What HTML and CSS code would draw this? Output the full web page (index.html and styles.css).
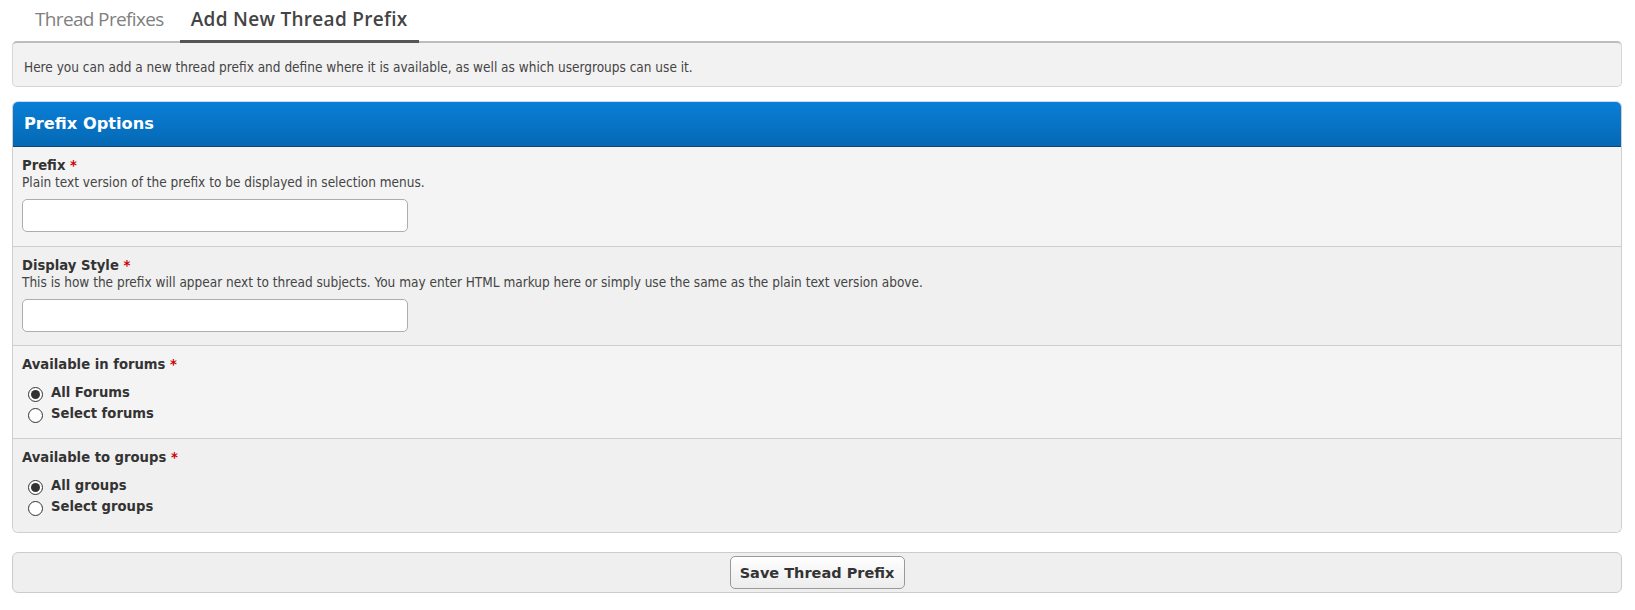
FILE: index.html
```html
<!DOCTYPE html>
<html>
<head>
<meta charset="utf-8">
<link rel="stylesheet" href="styles.css">
</head>
<body>
<div class="page">
  <div class="tabs">
    <a class="tab">Thread Prefixes</a>
    <a class="tab active">Add New Thread Prefix</a>
  </div>
  <div class="intro">Here you can add a new thread prefix and define where it is available, as well as which usergroups can use it.</div>

  <div class="panel">
    <div class="panel-head">Prefix Options</div>
    <div class="row light">
      <div class="label">Prefix <span class="req">*</span></div>
      <div class="desc">Plain text version of the prefix to be displayed in selection menus.</div>
      <input class="text" type="text">
    </div>
    <div class="row dark">
      <div class="label">Display Style <span class="req">*</span></div>
      <div class="desc">This is how the prefix will appear next to thread subjects. You may enter HTML markup here or simply use the same as the plain text version above.</div>
      <input class="text" type="text">
    </div>
    <div class="row light">
      <div class="label">Available in forums <span class="req">*</span></div>
      <div class="options">
        <label class="opt"><span class="radio checked"></span>All Forums</label>
        <label class="opt"><span class="radio"></span>Select forums</label>
      </div>
    </div>
    <div class="row dark last">
      <div class="label">Available to groups <span class="req">*</span></div>
      <div class="options">
        <label class="opt"><span class="radio checked"></span>All groups</label>
        <label class="opt"><span class="radio"></span>Select groups</label>
      </div>
    </div>
  </div>

  <div class="footer">
    <button class="btn">Save Thread Prefix</button>
  </div>
</div>
</body>
</html>
```
FILE: styles.css
```css
html, body {
  margin: 0;
  padding: 0;
  background: #fff;
}
body {
  font-family: "DejaVu Sans Condensed", "DejaVu Sans", sans-serif;
  font-size: 13px;
  color: #333;
}
.page {
  padding: 0 13px 0 12px;
}
.tabs {
  display: flex;
  gap: 5px;
  padding-left: 12px;
  height: 41px;
  position: relative;
  z-index: 2;
}
.tab {
  display: block;
  font-family: "Open Sans", sans-serif;
  font-size: 19px;
  line-height: 19px;
  padding: 10px 11px 0;
  color: #808080;
  letter-spacing: -0.65px;
}
.tab.active {
  color: #444;
  font-weight: 600;
  letter-spacing: 0.3px;
  border-bottom: 3px solid #555;
  height: 30px;
}
.intro {
  position: relative;
  z-index: 1;
  background: #f2f2f2;
  border: 1px solid #d6d6d6;
  border-top: 2px solid #bdbdbd;
  border-radius: 5px;
  box-sizing: border-box;
  height: 46px;
  padding: 16px 0 0 11px;
  font-size: 13.5px;
  line-height: 17px;
  color: #444;
}
.panel {
  margin-top: 14px;
  border: 1px solid #cfcfcf;
  border-top-color: #c8dcec;
  border-radius: 6px;
  overflow: hidden;
}
.panel-head {
  height: 45px;
  box-sizing: border-box;
  background: linear-gradient(#0a7fd7, #0569b4);
  border-bottom: 1px solid #0e4470;
  color: #fff;
  font-family: "DejaVu Sans", sans-serif;
  font-weight: bold;
  font-size: 16.2px;
  line-height: 44px;
  padding-left: 11px;
}
.row {
  padding: 10px 9px 0;
  border-bottom: 1px solid #cfcfcf;
  box-sizing: border-box;
}
.row.last { border-bottom: none; }
.row.light { background: #f4f4f4; }
.row.dark { background: #f0f0f0; }
.row:nth-child(2) { height: 100px; }
.row:nth-child(3) { height: 99px; }
.row:nth-child(4) { height: 93px; }
.row:nth-child(5) { height: 93px; }
.label {
  font-family: "DejaVu Sans", sans-serif;
  font-weight: bold;
  font-size: 13.2px;
  line-height: 17px;
  color: #333;
}
.req { color: #c00; }
.desc {
  font-size: 13.5px;
  line-height: 17px;
  color: #444;
}
.text {
  display: block;
  margin-top: 8px;
  width: 386px;
  height: 33px;
  box-sizing: border-box;
  border: 1px solid #adadad;
  border-radius: 5px;
  background: #fff;
}
.options {
  margin-top: 9px;
  padding-left: 6px;
}
.opt {
  display: flex;
  align-items: center;
  gap: 8px;
  font-family: "DejaVu Sans", sans-serif;
  font-weight: bold;
  font-size: 13.2px;
  line-height: 21px;
  color: #333;
}
.radio {
  width: 15px;
  height: 15px;
  box-sizing: border-box;
  border: 1px solid #333;
  border-radius: 50%;
  background: #fff;
  position: relative;
  top: 2px;
}
.radio.checked::after {
  content: "";
  position: absolute;
  left: 2px;
  top: 2px;
  width: 9px;
  height: 9px;
  border-radius: 50%;
  background: #333;
}
.footer {
  margin-top: 19px;
  height: 41px;
  box-sizing: border-box;
  background: #efefef;
  border: 1px solid #cccccc;
  border-radius: 6px;
  display: flex;
  justify-content: center;
  align-items: center;
}
.btn {
  font-family: "DejaVu Sans", sans-serif;
  font-weight: bold;
  font-size: 14.5px;
  color: #333;
  width: 175px;
  height: 33px;
  border: 1px solid #999;
  border-radius: 5px;
  background: linear-gradient(#ffffff, #ececec);
  padding: 0;
}
```
